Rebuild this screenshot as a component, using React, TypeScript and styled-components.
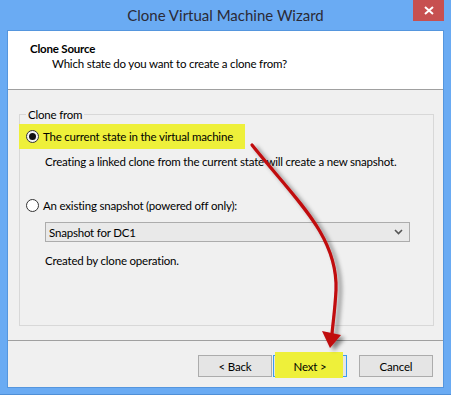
import React from 'react';
import styled, { createGlobalStyle } from 'styled-components';

const GlobalStyle = createGlobalStyle`
  html, body {
    margin: 0;
    padding: 0;
    background: #ffffff;
  }
  body {
    font-family: 'Segoe UI', Lato, 'Noto Sans', sans-serif;
    font-size: 11.5px;
    letter-spacing: -0.2px;
    color: #000;
  }
`;

const App = () => {
  return (
    <>
      <GlobalStyle/>
      <Window>
        <TitleBar>
          <span/>
          <Title>Clone Virtual Machine Wizard</Title>
          <CloseButton>
            <svg width="10" height="9" viewBox="0 0 10 9">
              <path d="M1 1 L9 8 M9 1 L1 8" stroke="#fff" strokeWidth="2"/>
            </svg>
          </CloseButton>
        </TitleBar>
        <Panel>
          <Header>
            <HeaderTitle>Clone Source</HeaderTitle>
            <HeaderSub>Which state do you want to create a clone from?</HeaderSub>
          </Header>
          <Body>
            <GroupBox>
              <Legend>Clone from</Legend>
              <OptionRow $marked>
                <Radio $checked/>
                <OptionLabel>The current state in the virtual machine</OptionLabel>
              </OptionRow>
              <Hint $top={5}>Creating a linked clone from the current state will create a new snapshot.</Hint>
              <OptionRow $top={24}>
                <Radio/>
                <OptionLabel>An existing snapshot (powered off only):</OptionLabel>
              </OptionRow>
              <Select>
                <span>Snapshot for DC1</span>
                <svg width="9" height="6" viewBox="0 0 9 6">
                  <path d="M1 1 L4.5 4.5 L8 1" stroke="#555" strokeWidth="1.6" fill="none"/>
                </svg>
              </Select>
              <Hint $top={11}>Created by clone operation.</Hint>
            </GroupBox>
            <Footer>
              <Button>&lt; Back</Button>
              <Button $primary $marked><span>Next &gt;</span></Button>
              <Button $gap={11}>Cancel</Button>
            </Footer>
          </Body>
        </Panel>
        <Arrow width="451" height="395" viewBox="0 0 451 395">
          <defs>
            <filter id="arrowShadow" x="-20%" y="-20%" width="150%" height="150%">
              <feDropShadow dx="4" dy="3" stdDeviation="2" floodColor="#000" floodOpacity="0.45"/>
            </filter>
          </defs>
          <g filter="url(#arrowShadow)">
            <path d="M252 145 C 296 200, 338 236, 336 290 C 335 310, 333 322, 332 334"
              stroke="#c0080c" strokeWidth="3.2" fill="none" strokeLinecap="round"/>
            <path d="M322 331 L341 335 L330 348 Z" fill="#c0080c"/>
          </g>
        </Arrow>
      </Window>
    </>
  );
}

const Window = styled.div`
  position: relative;
  width: 451px;
  height: 395px;
  box-sizing: border-box;
  background: #6aabf3;
  border-bottom: 1px solid #4f8fd6;
  display: flex;
  flex-direction: column;
  overflow: hidden;
`;
const TitleBar = styled.div`
  height: 30px;
  display: grid;
  grid-template-columns: 1fr auto 1fr;
  align-items: start;
`;
const Title = styled.div`
  margin-top: 5px;
  font-size: 15px;
  letter-spacing: 0;
  line-height: 20px;
  color: #2a2a36;
  white-space: nowrap;
`;
const CloseButton = styled.div`
  justify-self: end;
  width: 31px;
  height: 21px;
  margin-right: 7px;
  background: #c75050;
  display: flex;
  align-items: center;
  justify-content: center;
`;
const Panel = styled.div`
  margin: 0 7px;
  height: 358px;
  box-sizing: border-box;
  border: 1px solid #5596de;
  background: #f0f0f0;
  display: flex;
  flex-direction: column;
`;
const Header = styled.div`
  height: 59px;
  box-sizing: border-box;
  background: #fff;
  border-bottom: 1px solid #a0a0a0;
  padding: 10px 0 0 22px;
`;
const HeaderTitle = styled.div`
  font-weight: 700;
  line-height: 15px;
`;
const HeaderSub = styled.div`
  line-height: 15px;
  padding-left: 22px;
`;
const Body = styled.div`
  flex: 1;
  display: flex;
  flex-direction: column;
`;
const GroupBox = styled.fieldset`
  flex: 1;
  margin: 17px 9px 14px 11px;
  padding: 0;
  border: 1px solid #d8d8d8;
  min-width: 0;
`;
const Legend = styled.legend`
  margin-left: 6px;
  padding: 0 2px;
  line-height: 15px;
`;
const OptionRow = styled.div<{ $marked?: boolean; $top?: number }>`
  display: flex;
  align-items: center;
  gap: 4px;
  width: ${p => p.$marked ? '226px' : 'auto'};
  height: 25px;
  box-sizing: border-box;
  margin: ${p => p.$top ?? 2}px 0 0 -1px;
  padding-left: 7px;
  background: ${p => p.$marked ? '#eef03a' : 'transparent'};
`;
const Radio = styled.span<{ $checked?: boolean }>`
  width: 13px;
  height: 13px;
  box-sizing: border-box;
  border-radius: 50%;
  border: 1px solid #333;
  background: ${p => p.$checked ? '#f4f4f4' : '#fff'};
  display: flex;
  align-items: center;
  justify-content: center;
  flex-shrink: 0;
  &::after {
    content: '';
    display: ${p => p.$checked ? 'block' : 'none'};
    width: 7px;
    height: 7px;
    border-radius: 50%;
    background: #111;
  }
`;
const OptionLabel = styled.span`
  line-height: 15px;
  white-space: nowrap;
`;
const Hint = styled.div<{ $top: number }>`
  margin: ${p => p.$top}px 0 0 25px;
  line-height: 15px;
  white-space: nowrap;
`;
const Select = styled.div`
  margin: 4px 0 0 25px;
  width: 365px;
  height: 20px;
  box-sizing: border-box;
  border: 1px solid #acacac;
  background: #e9e9e9;
  display: flex;
  align-items: center;
  justify-content: space-between;
  padding: 0 6px 0 3px;
  line-height: 15px;
`;
const Footer = styled.div`
  border-top: 1px solid #a0a0a0;
  padding: 14px 10px 10px 0;
  display: flex;
  justify-content: flex-end;
  gap: 1px;
`;
const Button = styled.div<{ $primary?: boolean; $marked?: boolean; $gap?: number }>`
  position: relative;
  width: 74px;
  height: 22px;
  box-sizing: border-box;
  margin-left: ${p => p.$gap ?? 0}px;
  border: 1px solid ${p => p.$primary ? '#3c9cf0' : '#acacac'};
  background: #e5e5e5;
  display: flex;
  align-items: center;
  justify-content: center;
  line-height: 15px;
  &::before {
    content: '';
    display: ${p => p.$marked ? 'block' : 'none'};
    position: absolute;
    left: 1px;
    right: 3px;
    top: -4px;
    bottom: -2px;
    background: #eef03a;
  }
  span {
    position: relative;
  }
`;
const Arrow = styled.svg`
  position: absolute;
  left: 0;
  top: 0;
  pointer-events: none;
`;

export default App;
